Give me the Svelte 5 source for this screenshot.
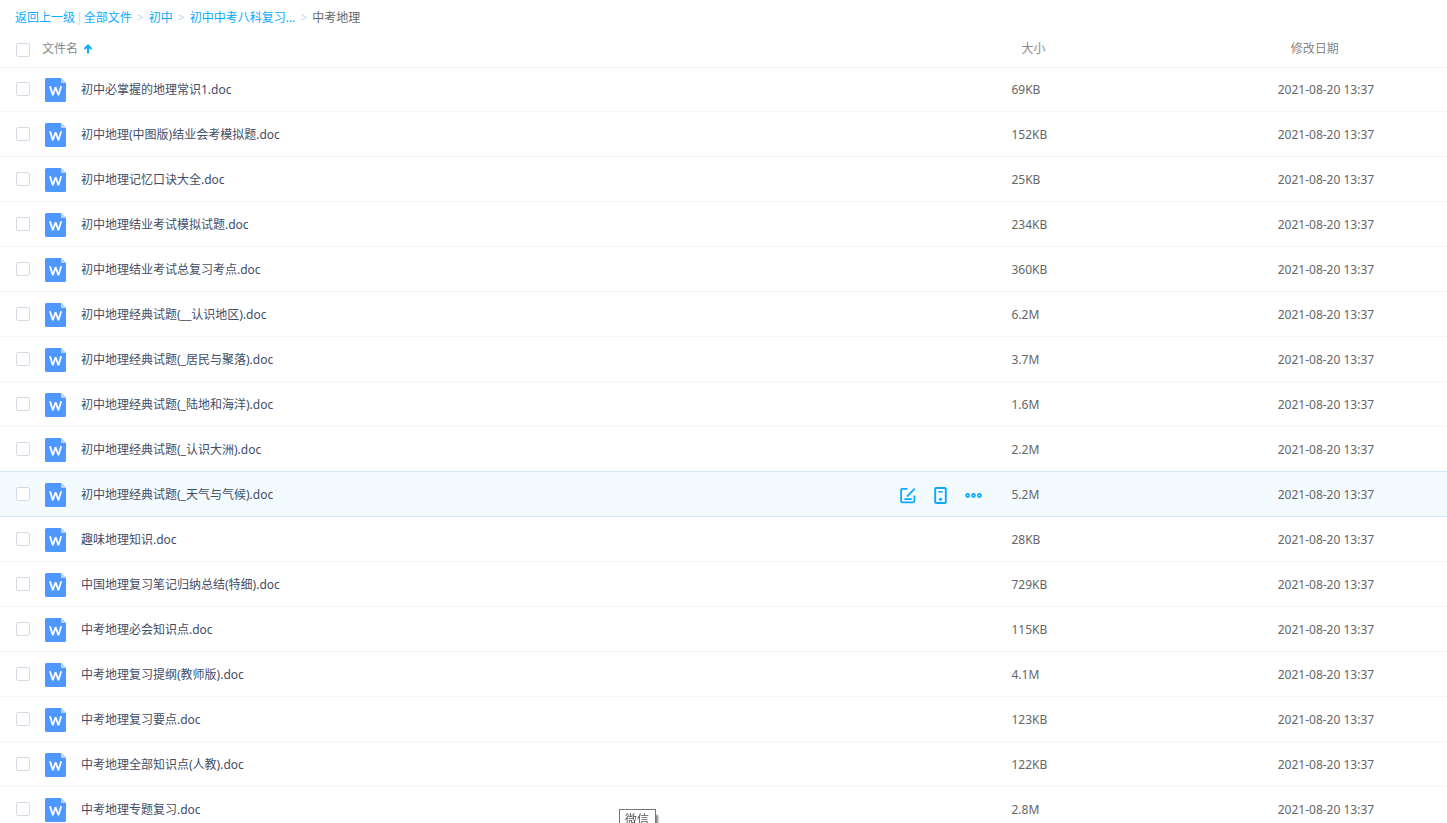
<script lang="ts">
  type FileItem = { name: string; size: string }

  const files: FileItem[] = [
    { name: '初中必掌握的地理常识1.doc', size: '69KB' },
    { name: '初中地理(中图版)结业会考模拟题.doc', size: '152KB' },
    { name: '初中地理记忆口诀大全.doc', size: '25KB' },
    { name: '初中地理结业考试模拟试题.doc', size: '234KB' },
    { name: '初中地理结业考试总复习考点.doc', size: '360KB' },
    { name: '初中地理经典试题(__认识地区).doc', size: '6.2M' },
    { name: '初中地理经典试题(_居民与聚落).doc', size: '3.7M' },
    { name: '初中地理经典试题(_陆地和海洋).doc', size: '1.6M' },
    { name: '初中地理经典试题(_认识大洲).doc', size: '2.2M' },
    { name: '初中地理经典试题(_天气与气候).doc', size: '5.2M' },
    { name: '趣味地理知识.doc', size: '28KB' },
    { name: '中国地理复习笔记归纳总结(特细).doc', size: '729KB' },
    { name: '中考地理必会知识点.doc', size: '115KB' },
    { name: '中考地理复习提纲(教师版).doc', size: '4.1M' },
    { name: '中考地理复习要点.doc', size: '123KB' },
    { name: '中考地理全部知识点(人教).doc', size: '122KB' },
    { name: '中考地理专题复习.doc', size: '2.8M' }
  ]
  const modified = '2021-08-20 13:37'

  let active = $state(9)
  let selected = $state(files.map(() => false))
  let allSelected = $derived(selected.every(Boolean))

  function toggleAll() {
    const next = !allSelected
    selected = files.map(() => next)
  }
</script>

<div class="file-list">
  <nav class="breadcrumb">
    <a href="#back">返回上一级</a>
    <span class="divider">|</span>
    <a href="#all">全部文件</a>
    <span class="sep">&gt;</span>
    <a href="#junior">初中</a>
    <span class="sep">&gt;</span>
    <a href="#review">初中中考八科复习...</a>
    <span class="sep">&gt;</span>
    <span class="current">中考地理</span>
  </nav>

  <table>
    <thead>
      <tr>
        <th class="col-check">
          <input type="checkbox" aria-label="全选" checked={allSelected} onchange={toggleAll} />
        </th>
        <th class="col-name">
          <button class="sort">
            文件名
            <svg class="arrow" viewBox="0 0 10 10" fill="none" stroke="currentColor" stroke-width="2">
              <path d="M5 9.500V2M1.500 5L5 1.500L8.500 5" />
            </svg>
          </button>
        </th>
        <th class="col-size">大小</th>
        <th class="col-date">修改日期</th>
      </tr>
    </thead>
    <tbody>
      {#each files as file, i}
        <tr class:active={active === i} onmouseenter={() => (active = i)}>
          <td class="col-check">
            <input type="checkbox" aria-label={file.name} bind:checked={selected[i]} />
          </td>
          <td class="col-name">
            <div class="name-cell">
              <svg class="doc-icon" viewBox="0 0 21 24">
                <path fill="#4e97ff" d="M1.500 0H16L21 5V22.500a1.500 1.500 0 0 1-1.500 1.500H1.500a1.500 1.500 0 0 1-1.500-1.500V1.500a1.500 1.500 0 0 1 1.500-1.500z" />
                <path fill="#b5d4ff" d="M16 0L21 5H17a1 1 0 0 1-1-1z" />
                <path
                  fill="none"
                  stroke="#fff"
                  stroke-width="1.800"
                  stroke-linejoin="bevel"
                  d="M5 8.300L7.800 17.300L10.600 9.200L13.400 17.300L16.200 8.300"
                />
              </svg>
              <a class="file-name" href="#file-{i}">{file.name}</a>
              {#if active === i}
                <div class="actions">
                  <button aria-label="编辑">
                    <svg viewBox="0 0 16 16" fill="none" stroke="currentColor" stroke-width="1.700">
                      <path d="M8 1.800H3Q2 1.800 2 2.800V13.500Q2 14.500 3 14.500H13Q14.500 14.500 14.500 13V8" />
                      <path d="M14.800 1.500L7.500 9M5 11.500H12" />
                    </svg>
                  </button>
                  <button aria-label="发送到设备">
                    <svg viewBox="0 0 16 16" fill="none" stroke="currentColor" stroke-width="1.800">
                      <rect x="3" y="1" width="10" height="14" rx="1" />
                      <path d="M6 4.500H10" stroke-width="1.500" />
                      <circle cx="8" cy="11.500" r="1.500" fill="currentColor" stroke="none" />
                    </svg>
                  </button>
                  <button aria-label="更多">
                    <svg viewBox="0 0 16 16" fill="none" stroke="currentColor" stroke-width="1.500">
                      <circle cx="2.500" cy="8" r="1.500" />
                      <circle cx="8" cy="8" r="1.500" />
                      <circle cx="13.500" cy="8" r="1.500" />
                    </svg>
                  </button>
                </div>
              {/if}
            </div>
          </td>
          <td class="col-size">{file.size}</td>
          <td class="col-date">{modified}</td>
        </tr>
      {/each}
    </tbody>
  </table>

  <div class="tooltip" role="tooltip">微信</div>
</div>

<style>
  :global(body) {
    margin: 0;
    background: #fff;
  }

  .file-list {
    height: 100vh;
    overflow: hidden;
    font-family: 'Noto Sans', 'Noto Sans CJK SC', sans-serif;
    font-size: 12px;
    line-height: 18px;
    color: #666;
  }

  a {
    color: #09aaff;
    text-decoration: none;
  }

  button {
    padding: 0;
    border: none;
    background: transparent;
    font: inherit;
    color: inherit;
    cursor: pointer;
  }

  .breadcrumb {
    display: flex;
    align-items: center;
    padding: 9px 15px 7px;
  }

  .divider {
    margin: 0 1px;
    color: #c4d8f4;
  }

  .sep {
    width: 17px;
    text-align: center;
    color: #c4d8f4;
  }

  .current {
    color: #666;
  }

  table {
    width: 100%;
    table-layout: fixed;
    border-collapse: separate;
    border-spacing: 0;
  }

  th,
  td {
    box-sizing: border-box;
    padding: 0;
    font-weight: normal;
    text-align: left;
    vertical-align: middle;
  }

  th {
    height: 33px;
    padding-bottom: 4px;
    color: #888;
  }

  th.col-check {
    padding-bottom: 2px;
  }

  td {
    height: 45px;
    padding-top: 2px;
    border-bottom: 1px solid #f2f6fd;
  }

  td.col-check {
    padding-top: 0;
  }

  tbody tr:first-child td {
    padding-top: 0;
    border-top: 1px solid #f2f6fd;
  }

  tbody tr:first-child .col-check {
    padding-bottom: 2px;
  }

  .col-check {
    width: 42px;
    padding-left: 16px;
  }

  .col-size {
    width: 18.4%;
  }

  .col-date {
    width: 11.7%;
  }

  th.col-size {
    padding-left: 10px;
  }

  th.col-date {
    padding-left: 13px;
  }

  input {
    display: block;
    appearance: none;
    box-sizing: border-box;
    width: 14px;
    height: 14px;
    margin: 0;
    border: 1px solid #d5dbe5;
    border-radius: 2px;
    background: #fff;
  }

  input:checked {
    border-color: #09aaff;
    background: #09aaff;
  }

  .sort {
    display: flex;
    align-items: center;
    gap: 5px;
  }

  .arrow {
    width: 10px;
    height: 10px;
    color: #09aaff;
  }

  .name-cell {
    display: flex;
    align-items: center;
    padding-left: 3px;
  }

  .doc-icon {
    flex: none;
    width: 21px;
    height: 24px;
    margin-right: 15px;
  }

  .file-name {
    color: #424e67;
  }

  .actions {
    display: flex;
    gap: 16px;
    margin-left: auto;
    padding-right: 29px;
    color: #09aaff;
  }

  .actions svg {
    display: block;
    width: 17px;
    height: 17px;
  }

  tr.active td {
    border-bottom-color: #d5e7fb;
    background: #f4fbff;
    box-shadow: 0 -1px 0 #d5e7fb;
  }

  /* hangs off the bottom edge of the window */
  .tooltip {
    position: fixed;
    bottom: -7px;
    left: 619px;
    padding: 1px 6px 0 5px;
    border: 1px solid #767676;
    background: #fff;
    box-shadow: 3px 5px 2px -1px rgba(0, 0, 0, 0.5);
    color: #575757;
  }
</style>
